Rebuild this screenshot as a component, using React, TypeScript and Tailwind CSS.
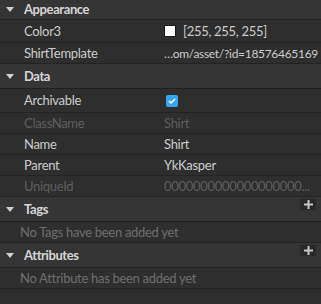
import React from "react";

type Prop = {
  name: string;
  value?: React.ReactNode;
  disabled?: boolean;
  h: string;
};

const Arrow = () => (
  <svg width="8" height="5" viewBox="0 0 8 5" className="ml-[6px] mr-[10px]">
    <polygon points="0,0 8,0 4,5" fill="#d0d0d0" />
  </svg>
);

const PlusButton = () => (
  <div className="absolute right-[5px] top-[2px] flex h-[11px] w-[16px] items-center justify-center bg-[#292929]">
    <svg width="9" height="9" viewBox="0 0 9 9">
      <rect x="3.5" y="0" width="2" height="9" fill="#c8c8c8" />
      <rect x="0" y="3.5" width="9" height="2" fill="#c8c8c8" />
    </svg>
  </div>
);

const Header: React.FC<{ title: string; h: string; plus?: boolean }> = ({
  title,
  h,
  plus,
}) => (
  <div
    className={`relative flex items-center border-b border-[#202020] bg-[#353535] ${h}`}
  >
    <Arrow />
    <span className="font-bold tracking-[-0.4px] text-[#d6d6d6]">{title}</span>
    {plus && <PlusButton />}
  </div>
);

const Row: React.FC<Prop> = ({ name, value, disabled, h }) => (
  <div className={`flex items-center border-b border-[#232323] ${h}`}>
    <span
      className={`w-[160px] shrink-0 pl-[24px] ${
        disabled ? "text-[#5f5f5f]" : "text-[#cccccc]"
      }`}
    >
      {name}
    </span>
    <div
      className={`min-w-0 flex-1 whitespace-nowrap pl-[4px] pr-[6px] ${
        disabled ? "text-[#5f5f5f]" : "text-[#cccccc]"
      }`}
    >
      {value}
    </div>
  </div>
);

const Empty: React.FC<{ text: string }> = ({ text }) => (
  <div className="flex h-[21px] items-center border-b border-[#232323] pl-[20px] text-[#6e6e6e]">
    {text}
  </div>
);

export default function App() {
  return (
    <div
      className="h-[304px] w-[321px] overflow-hidden bg-[#2e2e2e] text-[13px] leading-none tracking-[-0.3px]"
      style={{ fontFamily: "Lato, 'Noto Sans', sans-serif" }}
    >
      <Header title="Appearance" h="h-[20px]" />
      <Row
        name="Color3"
        h="h-[23px]"
        value={
          <span className="flex items-center">
            <span className="mr-[7px] h-[12px] w-[12px] border border-[#1a1a1a] bg-white" />
            <span>[255, 255, 255]</span>
          </span>
        }
      />
      <Row
        name="ShirtTemplate"
        h="h-[21px]"
        value={
          <span className="text-[12px] tracking-[-0.3px]">
            …om/asset/?id=18576465169
          </span>
        }
      />
      <Header title="Data" h="h-[25px]" />
      <Row
        name="Archivable"
        h="h-[24px]"
        value={
          <span className="ml-[2px] flex h-[12px] w-[12px] items-center justify-center rounded-[2px] bg-[#35a5f3]">
            <svg width="8" height="6" viewBox="0 0 8 6">
              <polyline
                points="1,3 3,5 7,1"
                fill="none"
                stroke="white"
                strokeWidth="1.6"
              />
            </svg>
          </span>
        }
      />
      <Row name="ClassName" h="h-[21px]" value="Shirt" disabled />
      <Row name="Name" h="h-[21px]" value="Shirt" />
      <Row name="Parent" h="h-[21px]" value="YkKasper" />
      <Row
        name="UniqueId"
        h="h-[21px]"
        value="0000000000000000000..."
        disabled
      />
      <Header title="Tags" h="h-[25px]" plus />
      <Empty text="No Tags have been added yet" />
      <Header title="Attributes" h="h-[25px]" plus />
      <Empty text="No Attribute has been added yet" />
    </div>
  );
}
